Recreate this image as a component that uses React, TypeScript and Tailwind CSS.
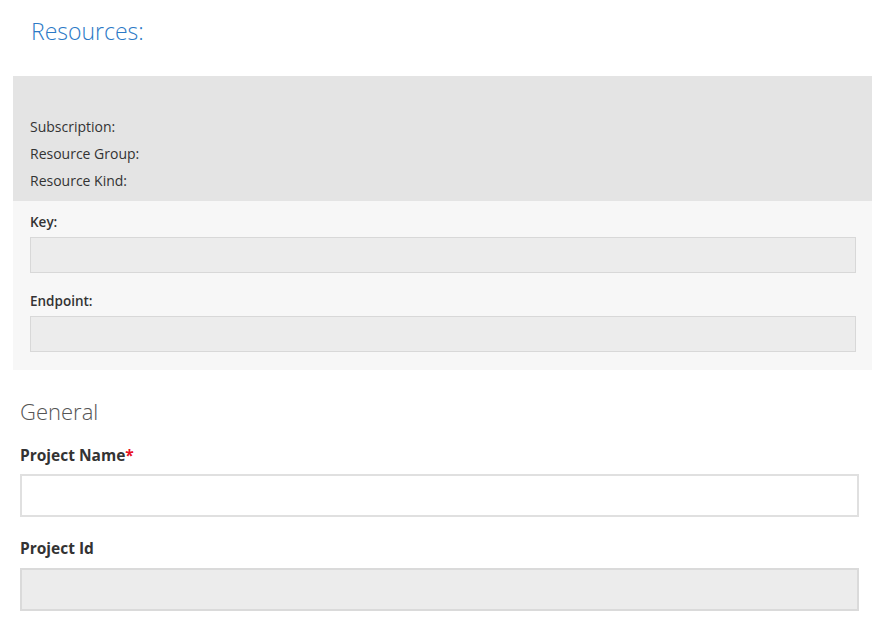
import React from 'react';

const font = { fontFamily: '"Open Sans", "Noto Sans", sans-serif' };

const InfoRow: React.FC<{ label: string }> = ({ label }) => (
  <div className="h-[27px] flex items-center text-[14px] text-[#333]">{label}</div>
);

const ReadonlyField: React.FC<{ label: string }> = ({ label }) => (
  <div className="flex flex-col">
    <div className="h-[26px] flex items-center text-[13.5px] font-semibold text-[#333]">{label}</div>
    <div className="mt-[2px] h-[36px] bg-[#ececec] border border-[#d8d8d8]" />
  </div>
);

export default function App() {
  return (
    <div className="w-[878px] h-[636px] bg-white overflow-hidden" style={font}>
      <div className="pl-[31px] pt-[14px] h-[76px]">
        <h1 className="text-[23px] font-light text-[#2b79c6] leading-[34px]">Resources:</h1>
      </div>

      <div className="ml-[13px] w-[859px]">
        <div className="bg-[#e4e4e4] h-[125px] pt-[37px] pl-[17px]">
          <InfoRow label="Subscription:" />
          <InfoRow label="Resource Group:" />
          <InfoRow label="Resource Kind:" />
        </div>
        <div className="bg-[#f7f7f7] h-[169px] pt-[8px] pl-[17px] pr-[16px] flex flex-col gap-[15px]">
          <ReadonlyField label="Key:" />
          <ReadonlyField label="Endpoint:" />
        </div>
      </div>

      <div className="px-[20px] w-[858px] box-content">
        <h2 className="mt-[24px] h-[34px] flex items-center text-[22px] font-light text-[#555]">General</h2>

        <div className="mt-[15px] h-[26px] flex items-center text-[15.5px] font-bold text-[#333]">
          Project Name<span className="text-[#e81123]">*</span>
        </div>
        <div className="mt-[5px] w-[839px] h-[43px] bg-white border-2 border-[#e0e0e0]" />

        <div className="mt-[19px] h-[25px] flex items-center text-[15.5px] font-bold text-[#333]">Project Id</div>
        <div className="mt-[7px] w-[839px] h-[43px] bg-[#ececec] border-2 border-[#dadada]" />
      </div>
    </div>
  );
}
